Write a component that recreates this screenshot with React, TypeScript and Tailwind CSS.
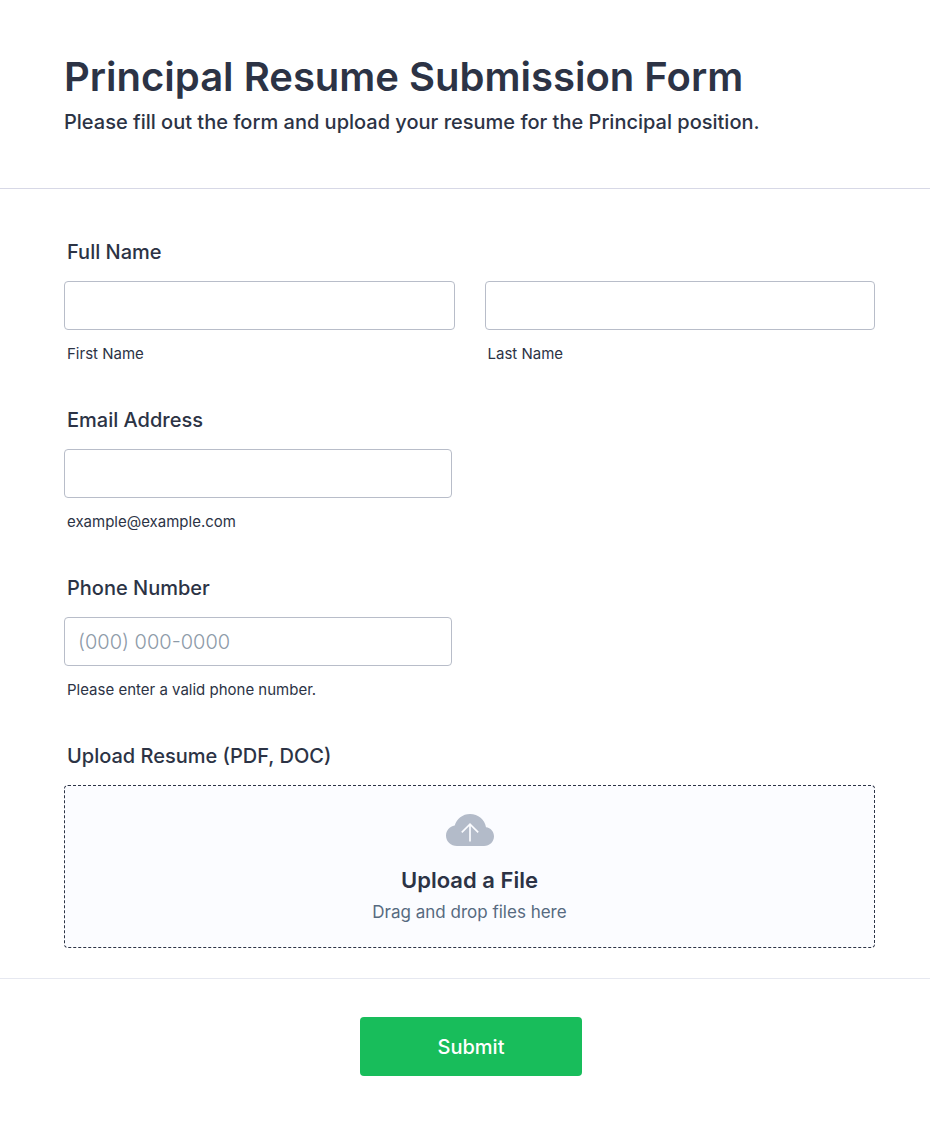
import type { InputHTMLAttributes } from "react";

type FieldProps = InputHTMLAttributes<HTMLInputElement> & {
  id: string;
  hint: string;
};

const Field = ({ id, hint, ...props }: FieldProps) => (
  <div className="flex flex-col gap-3.5">
    <input
      id={id}
      name={id}
      aria-describedby={`${id}-hint`}
      className="h-[49px] w-full rounded border border-[#b8bdc9] bg-white px-[13px] text-xl font-light text-[#2c3345] outline-none placeholder:text-[#8d9aa8] focus:border-blue-500"
      {...props}
    />
    <label htmlFor={id} id={`${id}-hint`} className="pl-[3px] text-[15px] leading-5">
      {hint}
    </label>
  </div>
);

const CloudIcon = () => (
  <svg width="48" height="32" viewBox="0 0 48 32" fill="none" aria-hidden="true">
    <path
      d="M11 32C4.900 32 0 27.500 0 21.800 0 16.500 3.600 12.500 8.700 11.600 10.500 4.800 16.700 0 24 0c8.200 0 14.900 5.700 16 13.200C44.600 13.700 48 17.600 48 22.300 48 27.700 43.700 32 38 32H11Z"
      fill="#b3bbc9"
    />
    <path d="M24 27.500V10M15.800 18.300 24 10.200l8.200 8.100" stroke="#fbfcff" strokeWidth="1.700" />
  </svg>
);

export default function App() {
  return (
    <form
      className="min-h-screen bg-white font-['Inter',sans-serif] text-[#2c3345]"
      onSubmit={(e) => e.preventDefault()}
    >
      <header className="border-b border-[#d7d8e6] pt-[52px] pr-[55px] pb-[53px] pl-16">
        <h1 className="text-[40px] leading-[50px] font-semibold">Principal Resume Submission Form</h1>
        <p className="mt-[7px] text-xl leading-[26px] font-medium">
          Please fill out the form and upload your resume for the Principal position.
        </p>
      </header>

      <div className="flex flex-col gap-11 border-b border-[#e6e8f0] pt-[51px] pr-[55px] pb-[30px] pl-16">
        {/* Full name */}
        <fieldset>
          <legend className="mb-[17px] pl-[3px] text-xl leading-6 font-medium">Full Name</legend>
          <div className="grid grid-cols-2 gap-[30px]">
            <Field id="first-name" hint="First Name" type="text" />
            <Field id="last-name" hint="Last Name" type="text" />
          </div>
        </fieldset>

        {/* Email */}
        <div className="flex max-w-[388px] flex-col gap-[17px]">
          <label htmlFor="email" className="pl-[3px] text-xl leading-6 font-medium">
            Email Address
          </label>
          <Field id="email" hint="example@example.com" type="email" />
        </div>

        {/* Phone */}
        <div className="flex max-w-[388px] flex-col gap-[17px]">
          <label htmlFor="phone" className="pl-[3px] text-xl leading-6 font-medium">
            Phone Number
          </label>
          <Field id="phone" hint="Please enter a valid phone number." type="tel" placeholder="(000) 000-0000" />
        </div>

        {/* Resume upload */}
        <div className="flex flex-col gap-[17px]">
          <label htmlFor="resume" className="pl-[3px] text-xl leading-6 font-medium">
            Upload Resume (PDF, DOC)
          </label>
          <label
            htmlFor="resume"
            className="relative flex cursor-pointer flex-col items-center rounded border border-dashed border-[#2c3345] bg-[#fbfcff] pt-7 pb-[23px]"
          >
            <input id="resume" name="resume" type="file" accept=".pdf,.doc,.docx" className="sr-only" />
            <CloudIcon />
            <span className="mt-5 text-[22px] leading-7 font-semibold">Upload a File</span>
            <span className="mt-1.5 text-[17px] leading-6 text-[#566a80]">Drag and drop files here</span>
          </label>
        </div>
      </div>

      <footer className="flex justify-center pt-[38px] pr-[52px] pb-12 pl-16">
        <button
          type="submit"
          className="h-[59px] w-[222px] rounded bg-[#18bd5b] text-xl font-medium text-white hover:bg-[#16aa52]"
        >
          Submit
        </button>
      </footer>
    </form>
  );
}
